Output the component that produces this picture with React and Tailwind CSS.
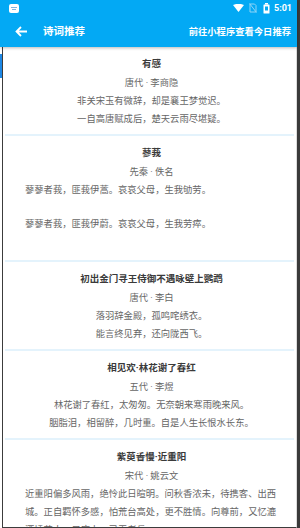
import clsx from "clsx";

const poems = [
  {
    title: "有感",
    author: "唐代 · 李商隐",
    lines: ["非关宋玉有微辞，却是襄王梦觉迟。", "一自高唐赋成后，楚天云雨尽堪疑。"],
  },
  {
    title: "蓼莪",
    author: "先秦 · 佚名",
    left: true,
    lines: [
      "蓼蓼者莪，匪莪伊蒿。哀哀父母，生我劬劳。",
      "",
      "蓼蓼者莪，匪莪伊蔚。哀哀父母，生我劳瘁。",
      "",
    ],
  },
  {
    title: "初出金门寻王侍御不遇咏壁上鹦鹉",
    author: "唐代 · 李白",
    lines: ["落羽辞金殿，孤鸣咤绣衣。", "能言终见弃，还向陇西飞。"],
  },
  {
    title: "相见欢·林花谢了春红",
    author: "五代 · 李煜",
    lines: ["林花谢了春红，太匆匆。无奈朝来寒雨晚来风。", "胭脂泪，相留醉，几时重。自是人生长恨水长东。"],
  },
  {
    title: "紫萸香慢·近重阳",
    author: "宋代 · 姚云文",
    left: true,
    lines: [
      "近重阳偏多风雨，绝怜此日暄明。问秋香浓未，待携客、出西城。正自羁怀多感，怕荒台高处，更不胜情。向尊前，又忆漉酒插花人、只座上、已无老兵。",
    ],
  },
];

const StatusBar = () => (
  <div className="flex h-[16px] items-center justify-between pl-[9px] pr-[5px]">
    <div className="flex h-[9px] w-[10px] flex-col items-center justify-center gap-[1px] rounded-[2px] bg-white">
      <div className="h-[1px] w-[6px] bg-[#7fb4e0]" />
      <div className="h-[1px] w-[4px] bg-[#7fb4e0]" />
    </div>
    <div className="flex items-center gap-[4px]">
      <svg width="11" height="8" viewBox="0 0 11 8">
        <path d="M0 1 Q5.5 -1.5 11 1 L5.5 8 Z" fill="#fff" />
      </svg>
      <svg width="8" height="10" viewBox="0 0 8 10" className="ml-[1px]">
        <path d="M1 1 H5.5 L7 2.5 V9 H1 Z" fill="none" stroke="#8fd4f7" strokeWidth="1" />
        <path d="M0.5 0.5 L7.5 9.5" stroke="#8fd4f7" strokeWidth="1" />
      </svg>
      <svg width="7" height="11" viewBox="0 0 7 11" className="ml-[2px]">
        <rect x="2" y="0" width="3" height="1.5" fill="#fff" />
        <rect x="0.5" y="1.5" width="6" height="9" rx="0.5" fill="#fff" />
        <rect x="2" y="3.5" width="3" height="4" fill="#03a9f4" />
      </svg>
      <span className="text-[9px] font-bold leading-none text-white">5:01</span>
    </div>
  </div>
);

const Toolbar = () => (
  <div className="flex h-[31px] items-center pl-[15px] pr-[6px]">
    <svg width="12" height="11" viewBox="0 0 12 11">
      <path d="M6 1 L1.5 5.5 L6 10 M1.5 5.5 H12" fill="none" stroke="#fff" strokeWidth="1.8" />
    </svg>
    <span className="ml-[16px] text-[10.5px] font-bold text-white">诗词推荐</span>
    <span className="ml-auto text-[9.3px] font-bold text-white">前往小程序查看今日推荐</span>
  </div>
);

const Poem = ({ poem, index }) => (
  <div
    className={clsx(
      "mx-[2px] border-b-2 border-[#e4f3fc] pl-[20px] pr-[16px] pt-[7px]",
      index === 1 ? "pb-[11px]" : "pb-[6px]"
    )}
  >
    <div className="text-center text-[9.5px] font-bold leading-[20px] text-[#3a3a3a]">{poem.title}</div>
    <div className="text-center text-[9.3px] leading-[18px] text-[#666]">{poem.author}</div>
    <div className={clsx("text-[9.3px] text-[#666]", poem.left ? "text-left" : "text-center")}>
      {poem.lines.map((line, i) => (
        <div key={i} className={clsx(line ? "leading-[18px]" : "h-[16px]")}>
          {line}
        </div>
      ))}
    </div>
  </div>
);

const App = () => {
  return (
    <div className="relative flex h-[528px] w-[300px] overflow-hidden bg-white font-['Roboto','Noto_Sans_CJK_SC',sans-serif]">
      <div className="flex h-full w-[297px] flex-col">
        <div className="relative z-10 bg-[#03a9f4] shadow-[0_1px_3px_rgba(0,0,0,0.28)]">
          <StatusBar />
          <Toolbar />
        </div>
        <div className="ml-[2px] min-h-0 flex-1 overflow-hidden border-b border-l border-r border-[#3c3c3c] border-r-[#dcdcdc]">
          {poems.map((poem, i) => (
            <Poem key={i} poem={poem} index={i} />
          ))}
        </div>
      </div>
      <div className="h-full w-[3px] bg-[#3a3a3a]" />
      <div className="absolute left-0 top-[54px] h-[24px] w-[2px] bg-[#1e88e5]" />
    </div>
  );
};

export default App;
